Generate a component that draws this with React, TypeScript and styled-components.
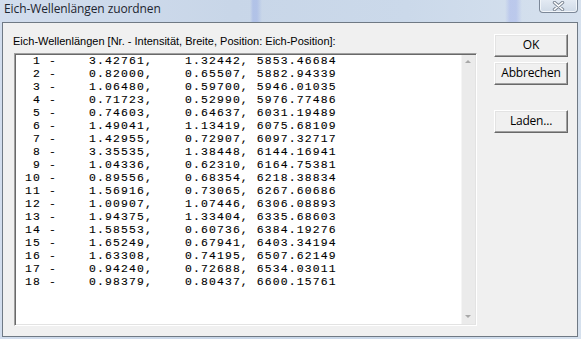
import React from "react";
import styled, { createGlobalStyle } from "styled-components";

const Global = createGlobalStyle`
  html, body { margin: 0; padding: 0; background: #c9d7e9; }
  body { width: 581px; height: 339px; overflow: hidden; }
`;

const Window = styled.div`
  width: 581px;
  height: 339px;
  display: flex;
  flex-direction: column;
  box-sizing: border-box;
  background: linear-gradient(90deg, #d2dded 0%, #c8d6e8 40%, #cbd9ea 70%, #d6e1ee 100%);
  overflow: hidden;
`;

const TitleBar = styled.div`
  height: 22px;
  flex: none;
  display: flex;
  justify-content: space-between;
  align-items: flex-start;
  padding-left: 4px;
  padding-right: 3px;
  background:
    linear-gradient(90deg,
      transparent 0 250px,
      rgba(150, 170, 230, 0.45) 253px 257px,
      transparent 262px 505px,
      rgba(160, 175, 235, 0.45) 510px 516px,
      transparent 522px);
`;

const Title = styled.span`
  font-family: "Open Sans", "Noto Sans", sans-serif;
  font-size: 12px;
  line-height: 16px;
  margin-top: 1px;
  color: #1d2530;
  letter-spacing: -0.1px;
`;

const CloseButton = styled.div`
  width: 39px;
  height: 13px;
  box-sizing: border-box;
  border: 1px solid #7c8898;
  border-top: none;
  border-radius: 0 0 4px 4px;
  background: linear-gradient(#e3eaf3, #cfdae7);
  box-shadow: inset 0 -1px 0 #f2f6fa, inset 1px 0 0 #f2f6fa, inset -1px 0 0 #f2f6fa;
  display: flex;
  align-items: center;
  justify-content: center;
`;

const Client = styled.div`
  flex: 1;
  margin: 0 3px 2px 2px;
  border: 1px solid #6f7984;
  background: #f0f0f0;
  display: flex;
  align-items: flex-start;
  padding: 11px 9px 9px 11px;
`;

const LeftColumn = styled.div`
  display: flex;
  flex-direction: column;
  flex: none;
`;

const Caption = styled.div`
  font-family: "Liberation Sans", Arial, sans-serif;
  font-size: 11px;
  line-height: 13px;
  color: #000;
  margin: 1px 0 5px -1px;
  white-space: nowrap;
`;

const ListBox = styled.div`
  width: 463px;
  height: 273px;
  box-sizing: border-box;
  border-top: 1px solid #a0a0a0;
  border-left: 1px solid #a0a0a0;
  border-right: 1px solid #ffffff;
  border-bottom: 1px solid #ffffff;
  box-shadow: inset 1px 1px 0 #696969, inset -1px -1px 0 #e3e3e3;
  background: #fff;
  display: flex;
  padding: 1px;
`;

const Lines = styled.div`
  flex: 1;
  padding: 0 0 0 1px;
  font-family: "Liberation Mono", "Courier New", monospace;
  font-size: 11.4px;
  letter-spacing: 1.16px;
  line-height: 13px;
  color: #000;
  -webkit-text-stroke: 0.12px #000;
  white-space: pre;
  overflow: hidden;
`;

const Line = styled.div`
  height: 13px;
`;

const ScrollBar = styled.div`
  width: 14px;
  flex: none;
  background: #ebebeb;
  box-shadow: inset 1px 0 0 #f5f5f5;
  display: flex;
  flex-direction: column;
  justify-content: space-between;
  align-items: center;
  padding: 5px 0 6px;
`;

const Arrow = styled.div<{ $down?: boolean }>`
  width: 0;
  height: 0;
  border-left: 3px solid transparent;
  border-right: 3px solid transparent;
  ${(p) =>
    p.$down
      ? "border-top: 3px solid #a8a8a8;"
      : "border-bottom: 3px solid #a8a8a8;"}
`;

const ButtonColumn = styled.div`
  display: flex;
  flex-direction: column;
  margin-left: 17px;
`;

const Button = styled.button<{ $gap?: number }>`
  width: 74px;
  height: 23px;
  margin-top: ${(p) => p.$gap ?? 0}px;
  padding: 0 0 1px;
  box-sizing: border-box;
  background: #f0f0f0;
  border: none;
  border-top: 1px solid #ffffff;
  border-left: 1px solid #ffffff;
  border-right: 1px solid #696969;
  border-bottom: 1px solid #696969;
  box-shadow: inset -1px -1px 0 #a0a0a0, inset 1px 1px 0 #e3e3e3;
  font-family: "Open Sans", "Noto Sans", sans-serif;
  font-size: 12px;
  line-height: 16px;
  color: #000;
  letter-spacing: -0.2px;
`;

const rows: [number, string, string, string][] = [
  [1, "3.42761", "1.32442", "5853.46684"],
  [2, "0.82000", "0.65507", "5882.94339"],
  [3, "1.06480", "0.59700", "5946.01035"],
  [4, "0.71723", "0.52990", "5976.77486"],
  [5, "0.74603", "0.64637", "6031.19489"],
  [6, "1.49041", "1.13419", "6075.68109"],
  [7, "1.42955", "0.72907", "6097.32717"],
  [8, "3.35535", "1.38448", "6144.16941"],
  [9, "1.04336", "0.62310", "6164.75381"],
  [10, "0.89556", "0.68354", "6218.38834"],
  [11, "1.56916", "0.73065", "6267.60686"],
  [12, "1.00907", "1.07446", "6306.08893"],
  [13, "1.94375", "1.33404", "6335.68603"],
  [14, "1.58553", "0.60736", "6384.19276"],
  [15, "1.65249", "0.67941", "6403.34194"],
  [16, "1.63308", "0.74195", "6507.62149"],
  [17, "0.94240", "0.72688", "6534.03011"],
  [18, "0.98379", "0.80437", "6600.15761"],
];

const pad = (s: string, n: number) => s.padStart(n, " ");

export default function App() {
  return (
    <>
      <Global />
      <Window>
        <TitleBar>
          <Title>Eich-Wellenlängen zuordnen</Title>
          <CloseButton>
            <svg width="13" height="10" viewBox="0 0 13 10">
              <path d="M2.5 1.5 L10.5 8.5 M10.5 1.5 L2.5 8.5" stroke="#7d8795" strokeWidth="3.4" strokeLinecap="round" />
              <path d="M2.5 1.5 L10.5 8.5 M10.5 1.5 L2.5 8.5" stroke="#ffffff" strokeWidth="1.6" strokeLinecap="round" />
            </svg>
          </CloseButton>
        </TitleBar>
        <Client>
          <LeftColumn>
            <Caption>Eich-Wellenlängen [Nr. - Intensität, Breite, Position: Eich-Position]:</Caption>
            <ListBox>
              <Lines>
                {rows.map(([n, a, b, c]) => (
                  <Line key={n}>
                    {pad(String(n), 3) + " - " + pad(a, 10) + ", " + pad(b, 10) + ", " + c}
                  </Line>
                ))}
              </Lines>
              <ScrollBar>
                <Arrow />
                <Arrow $down />
              </ScrollBar>
            </ListBox>
          </LeftColumn>
          <ButtonColumn>
            <Button>OK</Button>
            <Button $gap={5}>Abbrechen</Button>
            <Button $gap={25}>Laden...</Button>
          </ButtonColumn>
        </Client>
      </Window>
    </>
  );
}
